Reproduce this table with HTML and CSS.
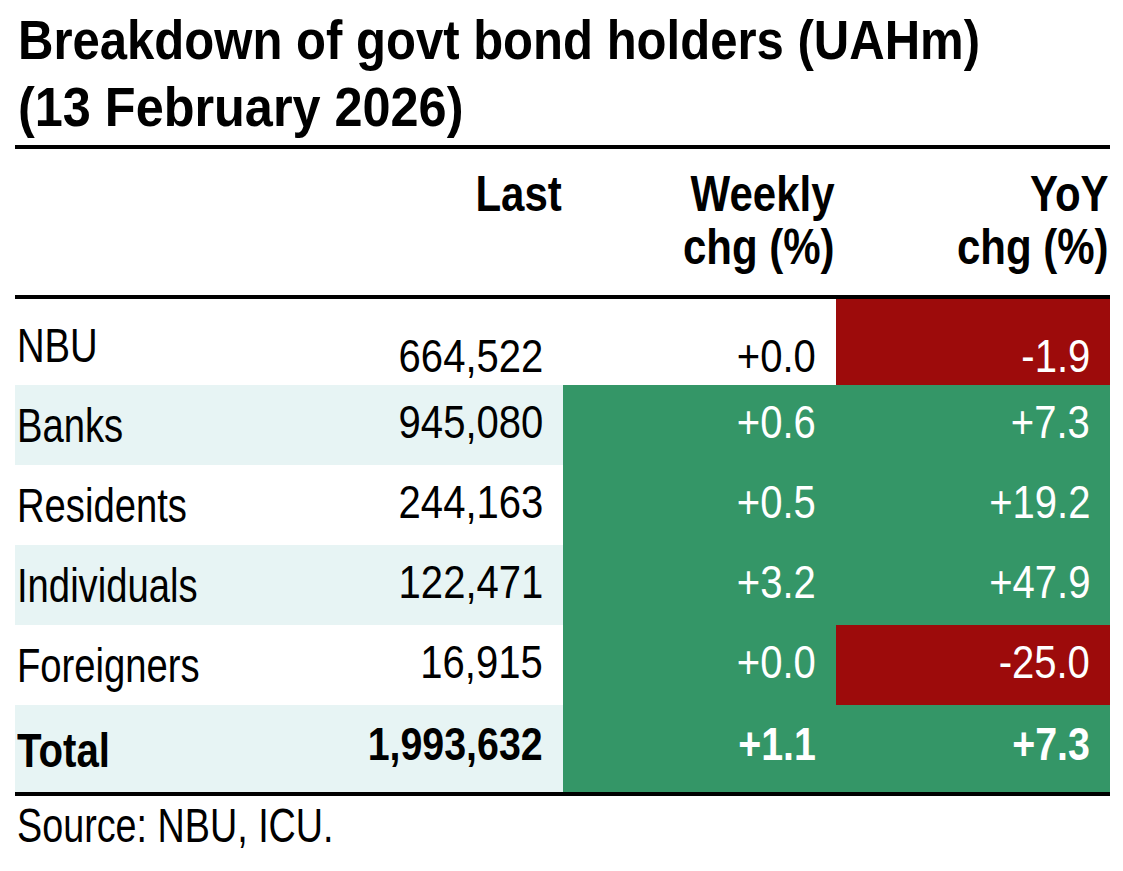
FILE: index.html
```html
<!DOCTYPE html>
<html lang="en">
<head>
<meta charset="utf-8">
<title>Breakdown of govt bond holders</title>
<link rel="stylesheet" href="styles.css">
</head>
<body>
<div class="page">
  <h1 class="title">
    <span class="tline">Breakdown of govt bond holders (UAHm)</span>
    <span class="tline tline-date">(13 February 2026)</span>
  </h1>
  <div class="table">
    <div class="row head">
      <div class="cell label"></div>
      <div class="cell num"><span class="t">Last</span></div>
      <div class="cell num"><span class="t">Weekly<br>chg (%)</span></div>
      <div class="cell num"><span class="t">YoY<br>chg (%)</span></div>
    </div>
    <div class="row first">
      <div class="cell label"><span class="t">NBU</span></div>
      <div class="cell num"><span class="t">664,522</span></div>
      <div class="cell num"><span class="t">+0.0</span></div>
      <div class="cell num neg"><span class="t">-1.9</span></div>
    </div>
    <div class="row alt">
      <div class="cell label"><span class="t">Banks</span></div>
      <div class="cell num"><span class="t">945,080</span></div>
      <div class="cell num pos"><span class="t">+0.6</span></div>
      <div class="cell num pos"><span class="t">+7.3</span></div>
    </div>
    <div class="row">
      <div class="cell label"><span class="t">Residents</span></div>
      <div class="cell num"><span class="t">244,163</span></div>
      <div class="cell num pos"><span class="t">+0.5</span></div>
      <div class="cell num pos"><span class="t">+19.2</span></div>
    </div>
    <div class="row alt">
      <div class="cell label"><span class="t">Individuals</span></div>
      <div class="cell num"><span class="t">122,471</span></div>
      <div class="cell num pos"><span class="t">+3.2</span></div>
      <div class="cell num pos"><span class="t">+47.9</span></div>
    </div>
    <div class="row">
      <div class="cell label"><span class="t">Foreigners</span></div>
      <div class="cell num"><span class="t">16,915</span></div>
      <div class="cell num pos"><span class="t">+0.0</span></div>
      <div class="cell num neg"><span class="t">-25.0</span></div>
    </div>
    <div class="row alt total">
      <div class="cell label"><span class="t">Total</span></div>
      <div class="cell num"><span class="t">1,993,632</span></div>
      <div class="cell num pos"><span class="t">+1.1</span></div>
      <div class="cell num pos"><span class="t">+7.3</span></div>
    </div>
  </div>
  <p class="source"><span class="t">Source: NBU, ICU.</span></p>
</div>
</body>
</html>
```
FILE: styles.css
```css
html, body {
  margin: 0;
  padding: 0;
  background: #ffffff;
}

body {
  font-family: "Liberation Sans", Arial, sans-serif;
  color: #000000;
}

.page {
  width: 1095px;
  padding: 6px 0 0 15px;
}

/* Title */
.title {
  margin: 0 0 5px 0;
  font-size: 56px;
  line-height: 67px;
  font-weight: bold;
}

.tline {
  display: block;
  width: max-content;
  white-space: nowrap;
  margin-left: 3px;
  transform: scaleX(0.876);
  transform-origin: left center;
}

.tline-date {
  transform: scaleX(0.9);
}

/* Condensed text */
.t {
  display: inline-block;
  white-space: nowrap;
}

.label .t {
  transform: scaleX(0.78);
  transform-origin: left center;
}

.num .t {
  transform: scaleX(0.87);
  transform-origin: right center;
}

/* Table */
.table {
  border-top: 4px solid #000;
  border-bottom: 4px solid #000;
}

.row {
  display: grid;
  grid-template-columns: 275px 273px 273px 274px;
  height: 80px;
}

.cell {
  display: flex;
  align-items: center;
  justify-content: flex-end;
  text-align: right;
}

.cell.label {
  justify-content: flex-start;
  padding-left: 2px;
  font-size: 49px;
  line-height: 49px;
}

.cell.num {
  padding: 0 20px 6px 0;
  font-size: 46px;
  line-height: 46px;
}

.row.alt .cell.label,
.row.alt .cell:nth-child(2) {
  background: #e7f4f4;
}

.cell.pos {
  background: #349667;
  color: #ffffff;
}

.cell.neg {
  background: #9d0b0b;
  color: #ffffff;
}

/* Header */
.row.head {
  height: 146px;
  border-bottom: 4px solid #000;
  font-weight: bold;
}

.row.head .cell.num {
  align-items: flex-start;
  padding: 19px 1px 0 0;
  font-size: 50px;
  line-height: 53px;
}

.row.head .num .t {
  transform: scaleX(0.84);
}

/* First body row sits a little lower */
.row.first {
  height: 86px;
}

.row.first .cell.label {
  padding-top: 6px;
}

.row.first .cell.num {
  padding-top: 27px;
  padding-bottom: 0;
}

/* Total row */
.row.total {
  height: 87px;
  font-weight: bold;
}

.row.total .cell.label {
  padding-top: 4px;
}

.row.total .label .t {
  transform: scaleX(0.82);
}

.row.total .cell.num {
  padding-bottom: 10px;
}

.row.total .num .t {
  transform: scaleX(0.855);
}

/* Source */
.source {
  margin: 2px 0 0 2px;
  font-size: 49px;
  line-height: 54px;
}

.source .t {
  transform: scaleX(0.77);
  transform-origin: left center;
}
```
